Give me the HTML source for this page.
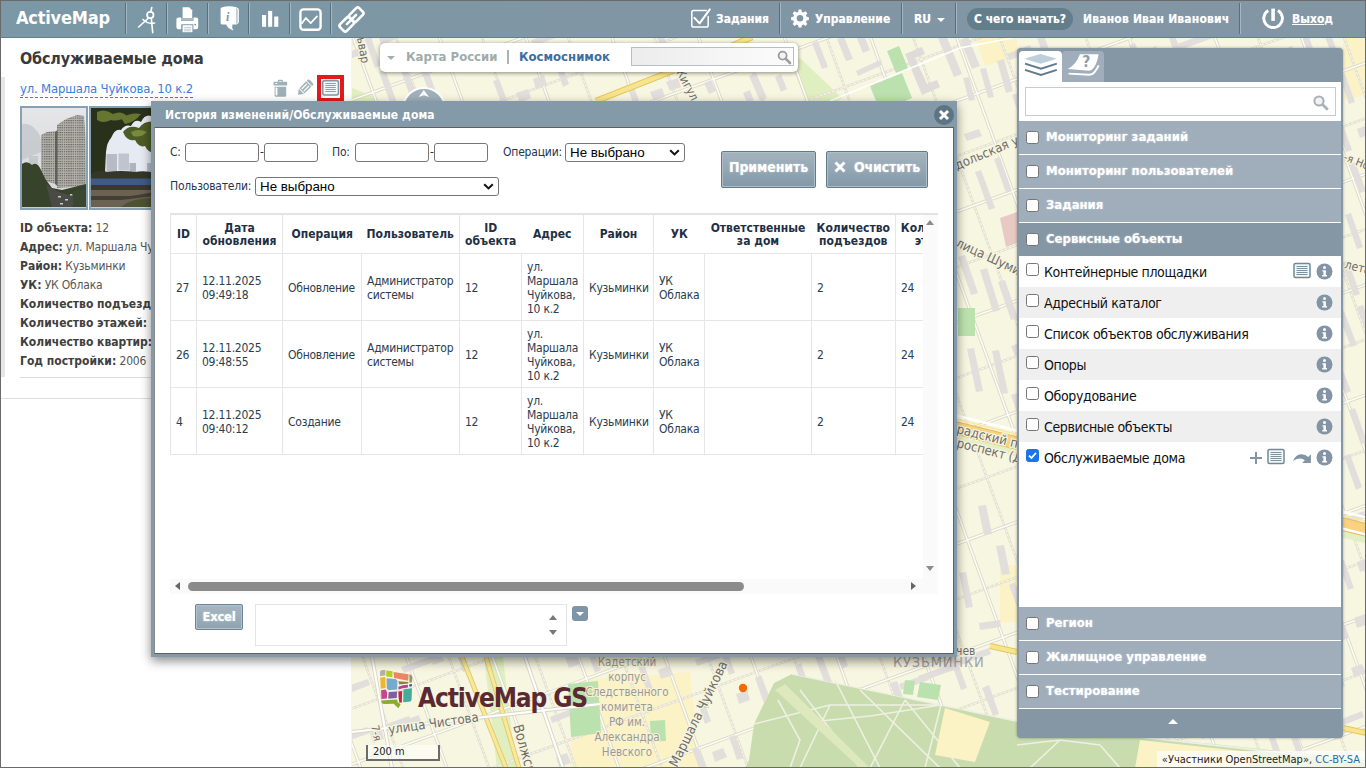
<!DOCTYPE html>
<html lang="ru">
<head>
<meta charset="utf-8">
<title>ActiveMap</title>
<style>
*{box-sizing:border-box;margin:0;padding:0}
html,body{width:1366px;height:768px;overflow:hidden;background:#fff}
body{font-family:"DejaVu Sans Condensed","Liberation Sans",sans-serif;font-size:12px;color:#2b3d4f;position:relative}
#frame{position:absolute;left:0;top:0;width:1366px;height:768px;border:1px solid #6a6a6a;z-index:100;pointer-events:none}
#app{position:absolute;left:1px;top:1px;width:1364px;height:766px;overflow:hidden;background:#fff}
/* ---------- top bar ---------- */
#top{position:absolute;left:0;top:0;width:1364px;height:37px;border-bottom:1px solid #64808f;z-index:5;background:linear-gradient(90deg,#7a98a6 0,#7c97a5 22%,#8196a4 45%,#8296a4 100%);color:#fff}
#top .logo{position:absolute;left:15px;top:5px;font-size:18px;font-weight:bold;line-height:24px;letter-spacing:-0.2px}
#top .sep{position:absolute;top:2px;width:2px;height:31px;border-left:1px solid #56707e;border-right:1px solid #a3b8c3}
#top .ti{position:absolute;top:0}
#top .txt{position:absolute;top:10px;font-size:12px;font-weight:bold;line-height:16px;white-space:nowrap;text-shadow:0 0 1px rgba(255,255,255,.4)}
#top .pill{position:absolute;left:966px;top:7px;width:106px;height:22px;border-radius:11px;background:#647d8b}
/* ---------- left panel ---------- */
#left{position:absolute;left:0;top:36px;width:350px;height:730px;background:#fff}

#left .ttl{position:absolute;left:19px;top:11px;font-size:16px;font-weight:bold;color:#3a3a3a;line-height:22px;letter-spacing:-0.15px;white-space:nowrap}
#left .stripe{position:absolute;left:0;top:40px;width:4px;height:300px;background:#e6e6e6}
#left .addr{position:absolute;left:19px;top:44px;font-size:13px;line-height:16px;color:#3b7ddd;border-bottom:1px dashed #3b7ddd;letter-spacing:-0.18px;white-space:nowrap;height:17px}
#left .ph{position:absolute;top:69px;height:104px;border:2px solid #86a1b3;background:#ccc;overflow:hidden}
#left .rows{position:absolute;left:19px;top:182px;width:320px;font-size:12px;line-height:19px;color:#555;white-space:nowrap;letter-spacing:-0.200px}
#left .rows b{color:#404040;letter-spacing:0}
#left .hr1{position:absolute;left:19px;top:340px;width:331px;height:1px;background:#dcdcdc}
#left .hr2{position:absolute;left:0;top:361px;width:350px;height:1px;background:#dedede}
#left .hi{position:absolute;left:316px;top:38px;width:27px;height:27px;border:4px solid #e3191c;background:#fff}
/* ---------- map ---------- */
#map{position:absolute;left:350px;top:36px;width:1014px;height:730px;background:#f6f3db;overflow:hidden}

#sw{position:absolute;left:29px;top:6px;width:418px;height:29px;background:#fff;border-radius:5px;box-shadow:0 1px 4px rgba(0,0,0,.45);font-size:13px;font-weight:bold;line-height:16px;white-space:nowrap}
#sw span{position:absolute;top:6px}
#sw .q{position:absolute;left:251px;top:4px;width:163px;height:19px;border:1px solid #b4c0c4;background:linear-gradient(90deg,#ececec,#f6f6f6 60%,#fcfcfc)}
#circ{position:absolute;left:51.400px;top:50px;width:44px;height:44px;border-radius:50%;background:#9fb0bb;border:2px solid #fff}
#lg{position:absolute;left:67px;top:645px;font-family:"DejaVu Sans Condensed","Liberation Sans",sans-serif;font-weight:bold;font-size:26px;line-height:32px;color:#5a2932;letter-spacing:-1.100px;white-space:nowrap}
#sc{position:absolute;left:15px;top:708px;width:74px;height:16px;border:2px solid #6b6b6b;border-top:0;background:rgba(255,255,255,.5);font-size:11px;line-height:13px;color:#222;padding-left:5px;font-family:"DejaVu Sans Condensed","Liberation Sans",sans-serif}
#att{position:absolute;right:0;bottom:0;height:16px;padding:0 5px 0 5px;background:rgba(255,255,255,.7);font-size:11px;line-height:17px;color:#222;white-space:nowrap;letter-spacing:0}
#att b{font-weight:normal;color:#1e6fa8}
/* ---------- dialog ---------- */
#dlg{position:absolute;left:150px;top:100px;width:806px;height:556px;background:#849aa8;box-shadow:0 4px 10px rgba(0,0,0,.46)}
#dlg .body{position:absolute;left:3px;top:26px;width:800px;height:527px;background:#fff;border:1px solid #5f5f5f;border-left-color:#8a8a8a}

#dlg .tt{position:absolute;left:14px;top:6px;font-size:12px;font-weight:bold;color:#fff;line-height:16px;white-space:nowrap;letter-spacing:.1px}
#dlg .cls{position:absolute;left:783px;top:4px;width:20px;height:20px;border-radius:10px;background:#5d7483}
#dlg .lbl{position:absolute;font-size:12px;line-height:16px;color:#1f3650;white-space:nowrap;letter-spacing:-0.2px}
#dlg .inp{position:absolute;height:19px;border:1px solid #767676;border-radius:3px;background:#fff}
#dlg .sel{position:absolute;height:19px;border:1px solid #767676;border-radius:3px;background:#fff;font-family:"Liberation Sans",sans-serif;font-size:13.333px;line-height:17px;color:#000;padding-left:4px;white-space:nowrap}
#dlg .sel svg{position:absolute;right:4px;top:5px}
#dlg .btn{position:absolute;top:50px;height:37px;border:1px solid #607a8a;border-radius:2px;background:linear-gradient(#a4b4bf,#8299a8);box-shadow:inset 0 0 0 1px #aebdc7;color:#fff;font-size:14px;font-weight:bold;line-height:31px;text-align:center;text-shadow:0 0 2px rgba(255,255,255,.55);white-space:nowrap;letter-spacing:-0.1px}
#grid{position:absolute;left:15px;top:85px;width:768px;height:366px;overflow:hidden}
#grid table{border-collapse:collapse;table-layout:fixed;width:809px;position:absolute;left:0;top:0;border-top:2px solid #e3e3e3}
#grid td,#grid th{border:1px solid #e6e6e6;padding:2px 5px 0;font-size:12px;line-height:14px;color:#2b3d4f;text-align:left;vertical-align:middle;letter-spacing:-0.25px;font-weight:normal}
#grid th{font-weight:bold;text-align:center;line-height:13px;color:#1f3044;letter-spacing:0;height:39px;padding:2px 3px 0}
#grid th.nb{border-left-style:hidden}
#grid tr.r td{height:67px}
#vs{position:absolute;left:768px;top:85px;width:15px;height:366px;background:#fafafa;border-top:2px solid #e3e3e3}
#hs{position:absolute;left:15px;top:451px;width:768px;height:15px;background:#fafafa}
#hs i{position:absolute;left:18px;top:3px;width:556px;height:9px;border-radius:4.500px;background:#8b8b8b}
.tri{position:absolute;width:0;height:0;border:4px solid transparent}
#xl{position:absolute;left:40px;top:476px;width:48px;height:26px;border:1px solid #6b8596;border-radius:2px;background:linear-gradient(#a7b7c2,#8da2b0);box-shadow:inset 0 0 0 1px #b3c1ca;color:#fff;font-weight:bold;font-size:13px;line-height:23px;text-align:center;text-shadow:0 0 2px rgba(255,255,255,.6);letter-spacing:-0.3px}
#ta{position:absolute;left:100px;top:476px;width:312px;height:42px;border:1px solid #e4e4e4;background:#fff}
#dd{position:absolute;left:417px;top:478px;width:16px;height:15px;border-radius:3px;background:#7d95a7}
/* ---------- right panel ---------- */
#rp{position:absolute;left:1016px;top:47px;width:326px;height:690px;background:#8597a5;border-radius:4px;box-shadow:0 0 3px rgba(0,0,0,.35)}

#rp .tab{position:absolute;top:3px;height:31px;border-radius:4px 4px 0 0}
#rp .cont{position:absolute;left:2px;top:34px;width:322px;height:627px;background:#fff}
#rp .cont>*{margin-top:-1px}
#rp .srch{position:absolute;left:6px;top:6px;width:311px;height:29px;border:1px solid #c3cdd2;background:#fff}
#rp .g{position:absolute;left:0;width:322px;height:33px;background:#a0aebb;color:#fff;font-weight:bold;font-size:13px;line-height:17px;text-shadow:0 0 2px rgba(255,255,255,.55)}
#rp .g.act{background:#8597a5}
#rp .g span{position:absolute;left:27px;top:7px;white-space:nowrap}
#rp .cb{position:absolute;left:7px;width:13px;height:13px;border:1px solid #767676;border-radius:2.500px;background:#fff}
#rp .g .cb{top:10px}
#rp .l{position:absolute;left:0;width:322px;height:31px;font-size:14px;line-height:18px;color:#111;letter-spacing:-0.35px}
#rp .l.alt{background:#efefef}
#rp .l span{position:absolute;left:25px;top:7px;white-space:nowrap}
#rp .l .cb{top:7px}
#rp .l svg{position:absolute;top:7px}
</style>
</head>
<body>
<div id="app">
  <div id="top">
    <div class="logo">ActiveMap</div>
    <div class="sep" style="left:124px"></div>
    <div class="sep" style="left:165px"></div>
    <div class="sep" style="left:206px"></div>
    <div class="sep" style="left:247px"></div>
    <div class="sep" style="left:288px"></div>
    <div class="sep" style="left:329px"></div>
    <svg class="ti" style="left:126px" width="240" height="36" viewBox="127 1 240 36" fill="none" stroke="#fff" stroke-linecap="round" stroke-linejoin="round">
      <!-- compass -->
      <g stroke-width="1.6">
        <path d="M151.8 7.5 L150.8 11.5"/>
        <circle cx="150.3" cy="15" r="3.2" stroke-width="1.8"/>
        <path d="M148.6 18 L138.6 27"/>
        <path d="M151.3 18.2 L152.7 32.6"/>
        <path d="M143 19.5 Q148 24.5 154.5 23"/>
      </g>
      <!-- printer -->
      <g stroke="none" fill="#fff">
        <path d="M182.6 7.3 h6.6 l3 3 v7.6 h-9.6z"/>
        <path d="M178.4 17.6 h2.6 v3.2 h12.6 v-3.2 h2.6 a2 2 0 0 1 2 2 v7.6 a2 2 0 0 1 -2 2 h-2.8 v-5 h-12.2 v5 h-2.8 a2 2 0 0 1 -2 -2 v-7.6 a2 2 0 0 1 2 -2z"/>
        <path d="M182.6 25.2 h9.8 v7 h-9.8z"/>
        <rect x="181" y="18.4" width="12.6" height="1.2" opacity=".6"/>
      </g>
      <g stroke="#7b97a5" stroke-width=".8" opacity=".6"><path d="M184.4 27.4h6.2M184.4 29.2h6.2M184.4 30.8h6.2"/></g>
      <circle cx="195.2" cy="24.6" r=".9" fill="#7b97a5" stroke="none"/>
      <!-- book -->
      <g stroke="none" fill="#fff">
        <path d="M221.6 7.4 Q229 5.2 236.4 7.2 L239 9 V22.6 L236.6 24.6 H232.4 Q231.4 28 233.6 30.6 Q228 29 226.2 24.6 H222 Q220.6 24.4 220.6 23 V8.8 Q220.6 7.6 221.6 7.4z"/>
      </g>
      <path d="M236.6 8.6 V23.4 M237.8 9.4 V22.6" stroke="#9fb4c0" stroke-width=".7"/>
      <text x="226" y="21" font-family="'Liberation Serif',serif" font-style="italic" font-weight="bold" font-size="12" fill="#7b97a5" stroke="none">i</text>
      <!-- bars -->
      <g stroke="none" fill="#fff">
        <rect x="262" y="15" width="4.1" height="11.8"/>
        <rect x="268.1" y="10.9" width="4.1" height="15.9"/>
        <rect x="274.2" y="16.5" width="4.1" height="10.3"/>
      </g>
      <!-- chart -->
      <rect x="300.4" y="9.4" width="20.2" height="20.4" rx="3" stroke-width="2.4"/>
      <path d="M302 23.2 L305.8 17.9 L310.7 23.1 L317 16.4" stroke-width="1.7"/>
      <!-- link -->
      <g transform="rotate(-45 351.5 19.5)" stroke-width="2.600">
        <rect x="338" y="14.800" width="13.500" height="9.400" rx="2.200"/>
        <rect x="351.500" y="14.800" width="13.500" height="9.400" rx="2.200"/>
        <path d="M345 19.500 H358" stroke-width="2.600"/>
      </g>
    </svg>
    <!-- right side -->
    <svg class="ti" style="left:686px" width="130" height="36" viewBox="687 1 130 36" fill="none" stroke="#fff" stroke-linecap="round" stroke-linejoin="round">
      <path d="M706.4 10.4 H693.6 Q691.8 10.4 691.8 12.2 V25.2 Q691.8 27 693.6 27 H706.4 Q708.2 27 708.2 25.2 V16.5" stroke-width="1.5"/>
      <path d="M694.4 17.9 L699.6 23.4 L709.8 9.3" stroke-width="2"/>
      <g fill="#fff" stroke="none">
        <path id="gear" d="M798.6 9.6h2.8l.5 2.4 1.5.6 2-1.4 2 2-1.4 2 .6 1.5 2.4.5v2.8l-2.4.5-.6 1.5 1.4 2-2 2-2-1.4-1.5.6-.5 2.4h-2.8l-.5-2.4-1.5-.6-2 1.4-2-2 1.4-2-.6-1.500-2.400-.500v-2.800l2.400-.500.6-1.500-1.400-2 2-2 2 1.400 1.500-.6zM800 14.900a3.300 3.300 0 1 0 0 6.600 3.300 3.300 0 0 0 0-6.600z" fill-rule="evenodd"/>
      </g>
    </svg>
    <div class="txt" style="left:715px">Задания</div>
    <div class="sep" style="left:778px"></div>
    <div class="txt" style="left:814px">Управление</div>
    <div class="sep" style="left:900px"></div>
    <div class="txt" style="left:913px">RU</div>
    <div style="position:absolute;left:936px;top:17px;width:0;height:0;border:4px solid transparent;border-top:4px solid #fff;border-bottom:0"></div>
    <div class="sep" style="left:954px"></div>
    <div class="pill"></div>
    <div class="txt" style="left:973px">С чего начать?</div>
    <div class="txt" style="left:1082px;letter-spacing:.18px">Иванов Иван Иванович</div>
    <div class="sep" style="left:1238px"></div>
    <svg class="ti" style="left:1256px" width="34" height="36" viewBox="1257 1 34 36" fill="none" stroke="#fff">
      <path d="M1268.200 10.400 A9.300 9.300 0 1 0 1278 10.400" stroke-width="3"/>
      <path d="M1273.100 8.600 V20.900" stroke-width="3.600"/>
    </svg>
    <div class="txt" style="left:1291px;text-decoration:underline">Выход</div>
  </div>
  <div id="left">
    <div class="ttl">Обслуживаемые дома</div>
    <div class="stripe"></div>
    <div class="addr">ул. Маршала Чуйкова, 10 к.2</div>
    <svg style="position:absolute;left:270px;top:41px" width="46" height="22" viewBox="0 0 46 22">
      <!-- trash -->
      <g fill="#9db0b8">
        <path d="M6.800 3.200 Q6.800 1.800 8.200 1.800 H10.600 Q12 1.800 12 3.200 V3.800 H10.600 V3.100 H8.200 V3.800 H6.800z"/>
        <path d="M3.600 3.800 H15.200 Q16.200 3.800 16.200 4.800 V7.400 H2.600 V4.800 Q2.600 3.800 3.600 3.800z"/>
        <path d="M3.600 8.800 H15.200 V17.400 Q15.200 18.800 13.800 18.800 H5 Q3.600 18.800 3.600 17.400z"/>
      </g>
      <rect x="4.600" y="9.600" width="1.800" height="7.800" rx=".6" fill="#fff"/>
      <rect x="4.200" y="4.900" width="2.200" height="1" rx=".5" fill="#fff"/>
      <!-- pencil -->
      <g transform="translate(33.600 10.200) rotate(45)" fill="#a3b3ba">
        <path d="M-3.700 -9 Q0 -10.500 3.700 -9 V-6.800 H-3.700z"/>
        <rect x="-3.700" y="-6" width="7.400" height="9.600"/>
        <path d="M-3.700 4.600 H3.700 L0 9.400z"/>
        <rect x="-2.100" y="-5" width="1.200" height="7.600" fill="#fff"/>
        <rect x=".9" y="-5" width="1.200" height="7.600" fill="#fff"/>
      </g>
    </svg>
    <div class="hi">
      <svg width="19" height="19" viewBox="0 0 19 19" style="position:absolute;left:0;top:0">
        <rect x="1.700" y="1.600" width="15.800" height="14.400" rx="2" fill="#f4f6f7" stroke="#7f97a3" stroke-width="1.600"/>
        <path d="M4.400 4.500h10.400M4.400 6.500h10.400M4.400 8.500h10.400M4.400 10.500h10.400M4.400 12.500h10.400" stroke="#8da0ac" stroke-width="1.100"/>
      </svg>
    </div>
    <div class="ph" style="left:19px;width:68px">
      <svg width="64" height="99" viewBox="0 0 64 99" preserveAspectRatio="none">
        <defs><linearGradient id="sky1" x1="0" y1="0" x2="0" y2="1"><stop offset="0" stop-color="#e6e6e8"/><stop offset="1" stop-color="#d2d5d8"/></linearGradient>
        <pattern id="win" width="2.200" height="2.400" patternUnits="userSpaceOnUse"><rect width="2.200" height="2.400" fill="#b4b2ab"/><rect width="1.500" height="1.100" fill="#6b6b66"/></pattern></defs>
        <rect width="64" height="99" fill="url(#sky1)"/>
        <path d="M0 16 Q8 14 16 24 Q20 30 19 44 L0 52z" fill="#c3c7cb" opacity=".8"/>
        <rect x="7" y="48" width="9" height="11" fill="#c6c9ca"/>
        <path d="M19 27 L25 24 L34 23 L34 76 L19 72z" fill="url(#win)"/>
        <path d="M35 17 L44 11 L55 7 L62 8 L63.500 30 L64 78 L35 80z" fill="url(#win)"/>
        <path d="M33 24 L35.500 22 L35.500 78 L33 76z" fill="#5f5f59"/>
        <path d="M0 56 Q5 52 10 57 Q15 53 19 62 L24 72 L30 80 L40 82 L64 76 V99 H0z" fill="#38432c"/>
        <path d="M24 76 Q34 84 44 86 L58 88 L50 99 L30 99z" fill="#4b4b45"/>
        <path d="M36 88 h3 v1.500 h-3z M43 91 h3 v1.500 h-3z M48 86 h3 v1.500 h-3z M38 95 h3 v1.500 h-3z" fill="#c9c9c9"/>
        <path d="M50 84 Q58 80 64 82 V99 H52z" fill="#3a4630"/>
      </svg>
    </div>
    <div class="ph" style="left:88px;width:68px">
      <svg width="64" height="99" viewBox="0 0 64 99" preserveAspectRatio="none">
        <rect width="64" height="99" fill="#e6ebf3"/>
        <path d="M0 0 H60 V8 Q54 6 50 14 Q44 10 40 18 Q34 16 30 22 Q24 20 20 30 Q16 34 15 44 L14 64 L0 72z" fill="#2a311a"/>
        <path d="M6 4 Q14 0 22 6 Q30 2 36 8 Q28 14 20 12 Q12 16 6 12z M30 10 Q40 4 50 6 Q44 14 34 16z" fill="#66752f"/>
        <path d="M32 24 Q38 16 48 20 Q54 12 64 14 V44 Q58 46 54 38 Q48 40 44 32 Q36 34 32 24z" fill="#4d5c27"/>
        <path d="M40 24 Q48 20 56 24 Q50 30 42 28z" fill="#7a8a3a"/>
        <rect x="15.500" y="46" width="10.500" height="19" fill="#b7bbc6"/>
        <rect x="27.500" y="45.500" width="10.500" height="17" fill="#c0c4ce"/>
        <rect x="38.500" y="55" width="6.500" height="9" fill="#b0b4bf"/>
        <rect x="56" y="55" width="6" height="10" fill="#b9bdc6"/>
        <path d="M0 66 Q10 60 16 64 Q30 62 44 64 Q54 62 64 65 V72 H0z" fill="#34362a"/>
        <rect x="0" y="70.500" width="64" height="6.500" fill="#3f5a84"/>
        <rect x="0" y="77" width="64" height="5" fill="#3a382f"/>
        <rect x="0" y="82" width="64" height="17" fill="#6b6254"/>
        <path d="M0 88 H40 L64 84 V88 L30 92 H0z" fill="#443f34"/>
        <path d="M30 99 Q40 90 64 90 V99z" fill="#4d5233"/>
      </svg>
    </div>
    <div class="rows">
      <div><b>ID объекта:</b> 12</div>
      <div><b>Адрес:</b> ул. Маршала Чуйкова, 10 к.2</div>
      <div><b>Район:</b> Кузьминки</div>
      <div><b>УК:</b> УК Облака</div>
      <div><b>Количество подъездов:</b> 2</div>
      <div><b>Количество этажей:</b> 24</div>
      <div><b>Количество квартир:</b> 184</div>
      <div><b>Год постройки:</b> 2006</div>
    </div>
    <div class="hr1"></div>
    <div class="hr2"></div>
  </div>
  <div id="map">
<svg width="1014" height="730" viewBox="351 37 1014 730" style="position:absolute;left:0;top:0">
<defs><clipPath id="nopark"><path d="M352 37H1366V768H352z M792 674 L941 705 L990 716 L1040 726 L1366 760 L1366 768 L745 768 L749 760 L754 724 L774 683z" clip-rule="evenodd"/></clipPath></defs>
<rect x="351" y="37" width="1015" height="731" fill="#f7f6e1"/>
<!-- light yellow institutional areas -->
<path d="M575 680 L690 672 L700 768 L570 768z M975 37 H1017 V58 L985 66z M1343 37 H1366 V95 L1343 100z M1000 565 H1017 V622 H1000z" fill="#fbf2c6"/>
<!-- light green strips -->
<path d="M790 62 L800 58 L842 98 L838 101 H806z M352 88 L372 96 L380 101 H352z M484 657 H503 L516 768 H497z" fill="#e0efc0"/>
<!-- park -->
<path d="M792 674 L941 705 L990 716 L1040 726 L1366 760 L1366 768 L745 768 L749 760 L754 724 L774 683z" fill="#c9dcae"/>
<path d="M792 674 L941 705 L1040 726 M778 700 L800 740 L790 768 M754 724 L830 705 L941 705 M800 690 L860 768 M830 705 L800 768 M835 680 L880 768 M860 690 L940 768 M905 700 L870 768 M905 700 L960 768 M941 705 L925 768 M810 722 L870 716 L941 705 M1040 726 L1366 762 M1060 740 L1030 768 M1100 745 L1120 768 M1017 745 L1060 740 L1100 745" fill="none" stroke="#eef0e2" stroke-width="1.6"/>
<path d="M775 690 L860 768 L870 768 L785 684z" fill="#dde9bd"/>
<!-- yellow block in park -->
<path d="M945 708 L990 722 L975 762 L935 755z M1140 740 L1250 752 V768 H1135z" fill="#fbf2c6"/>
<!-- streets -->
<g clip-path="url(#nopark)">
<path d="M-106 211 L1398 -336 M-70 309 L1433 -238 M-35 407 L1469 -140 M1 504 L1504 -43 M36 602 L1540 55 M72 700 L1575 153 M107 798 L1611 250 M143 895 L1647 348 M179 993 L1682 446 M214 1091 L1718 544 M250 1189 L1753 641 M285 1286 L1789 739 M321 1384 L1824 837 M356 1482 L1860 935 M392 1579 L1896 1032 M428 1677 L1931 1130 M463 1775 L1967 1228 M42 -226 L520 1090 M118 -253 L596 1062 M194 -281 L673 1035 M270 -309 L749 1007 M346 -336 L825 979 M422 -364 L901 952 M498 -392 L977 924 M574 -419 L1053 896 M650 -447 L1129 868 M727 -475 L1205 841 M803 -503 L1282 813 M879 -530 L1358 785 M955 -558 L1434 758 M1031 -586 L1510 730 M1107 -613 L1586 702 M1183 -641 L1662 675 M1259 -669 L1738 647 M1335 -696 L1814 619" fill="none" stroke="#e3e0d1" stroke-width="2.600"/>
<path d="M-106 211 L1398 -336 M-70 309 L1433 -238 M-35 407 L1469 -140 M1 504 L1504 -43 M36 602 L1540 55 M72 700 L1575 153 M107 798 L1611 250 M143 895 L1647 348 M179 993 L1682 446 M214 1091 L1718 544 M250 1189 L1753 641 M285 1286 L1789 739 M321 1384 L1824 837 M356 1482 L1860 935 M392 1579 L1896 1032 M428 1677 L1931 1130 M463 1775 L1967 1228 M42 -226 L520 1090 M118 -253 L596 1062 M194 -281 L673 1035 M270 -309 L749 1007 M346 -336 L825 979 M422 -364 L901 952 M498 -392 L977 924 M574 -419 L1053 896 M650 -447 L1129 868 M727 -475 L1205 841 M803 -503 L1282 813 M879 -530 L1358 785 M955 -558 L1434 758 M1031 -586 L1510 730 M1107 -613 L1586 702 M1183 -641 L1662 675 M1259 -669 L1738 647 M1335 -696 L1814 619" fill="none" stroke="#fbfaf0" stroke-width="1" stroke-dasharray="3 1.500"/>
<path d="M-124 162 L1380 -385 M-88 260 L1415 -287 M-53 358 L1451 -189 M-17 456 L1486 -92 M19 553 L1522 6 M54 651 L1558 104 M90 749 L1593 202 M125 847 L1629 299 M161 944 L1664 397 M196 1042 L1700 495 M232 1140 L1735 592 M268 1237 L1771 690 M303 1335 L1807 788 M339 1433 L1842 886 M374 1531 L1878 983 M410 1628 L1913 1081 M445 1726 L1949 1179 M4 -212 L483 1104 M80 -240 L559 1076 M156 -267 L635 1048 M232 -295 L711 1021 M308 -323 L787 993 M385 -350 L863 965 M461 -378 L939 938 M537 -406 L1016 910 M613 -433 L1092 882 M689 -461 L1168 854 M765 -489 L1244 827 M841 -517 L1320 799 M917 -544 L1396 771 M993 -572 L1472 744 M1070 -600 L1548 716 M1146 -627 L1625 688 M1222 -655 L1701 660 M1298 -683 L1777 633" fill="none" stroke="#dcd9c9" stroke-width="3.4"/>
<path d="M-124 162 L1380 -385 M-88 260 L1415 -287 M-53 358 L1451 -189 M-17 456 L1486 -92 M19 553 L1522 6 M54 651 L1558 104 M90 749 L1593 202 M125 847 L1629 299 M161 944 L1664 397 M196 1042 L1700 495 M232 1140 L1735 592 M268 1237 L1771 690 M303 1335 L1807 788 M339 1433 L1842 886 M374 1531 L1878 983 M410 1628 L1913 1081 M445 1726 L1949 1179 M4 -212 L483 1104 M80 -240 L559 1076 M156 -267 L635 1048 M232 -295 L711 1021 M308 -323 L787 993 M385 -350 L863 965 M461 -378 L939 938 M537 -406 L1016 910 M613 -433 L1092 882 M689 -461 L1168 854 M765 -489 L1244 827 M841 -517 L1320 799 M917 -544 L1396 771 M993 -572 L1472 744 M1070 -600 L1548 716 M1146 -627 L1625 688 M1222 -655 L1701 660 M1298 -683 L1777 633" fill="none" stroke="#fdfdf6" stroke-width="1.6"/>
<!-- buildings -->
<path d="M367 727L370 733L342 743L339 737zM368 679L370 685L347 694L345 687zM370 733L381 729L384 739L373 743zM409 716L412 722L383 732L381 726zM408 719L419 715L422 724L411 728zM435 655L437 661L404 673L401 667zM429 656L440 652L444 661L433 665zM453 644L459 642L469 670L463 672zM556 757L567 753L571 763L559 767zM584 704L586 710L552 723L550 717zM363 47L365 53L343 62L340 55zM565 658L577 654L580 664L569 668zM363 34L369 32L381 65L375 68zM379 72L385 69L397 103L391 105zM583 639L589 637L601 670L595 673zM401 30L404 36L381 45L379 38zM400 68L406 66L419 100L412 102zM417 61L424 58L436 92L430 94zM638 666L644 664L654 692L648 694zM658 670L669 666L673 675L661 679zM692 749L698 747L709 775L703 778zM697 701L703 699L711 721L705 724zM712 752L723 748L727 757L715 762zM493 81L499 79L512 113L506 115zM718 652L720 658L697 666L695 660zM729 737L735 735L744 758L737 760zM516 93L528 89L531 98L520 103zM717 641L723 639L735 673L729 675zM736 694L747 690L750 700L739 704zM533 79L544 75L547 85L536 89zM755 678L761 675L774 709L767 712zM564 28L567 34L533 46L531 40zM555 64L561 62L569 84L563 87zM795 666L801 663L809 686L803 688zM813 651L819 648L832 682L825 684zM628 89L634 87L644 115L638 117zM834 646L840 644L848 666L842 669zM650 92L662 88L665 97L654 101zM653 27L659 24L672 58L666 60zM666 82L678 78L681 87L670 91zM890 683L897 681L905 703L899 706zM927 674L929 680L901 690L899 684zM952 664L954 670L920 682L918 676zM743 93L750 90L758 113L752 115zM949 656L955 654L967 688L961 690zM989 648L991 654L958 666L955 660zM982 688L989 685L999 714L993 716zM1020 677L1027 675L1037 703L1031 705zM1009 585L1015 582L1027 616L1021 618zM1063 678L1065 685L1037 695L1034 689zM1088 669L1090 675L1056 687L1054 681zM1079 715L1090 711L1094 720L1082 725zM877 92L883 90L891 113L885 115zM1102 660L1105 666L1076 676L1074 670zM1097 712L1108 708L1112 717L1101 722zM1011 395L1017 393L1025 416L1019 418zM1104 661L1115 657L1118 667L1107 671zM1118 695L1124 692L1133 715L1127 717zM1011 346L1022 342L1026 352L1015 356zM1135 684L1141 682L1153 716L1147 718zM1157 691L1168 687L1171 696L1160 701zM1171 729L1182 725L1185 735L1174 739zM1175 672L1181 670L1190 693L1184 695zM1193 716L1199 714L1208 737L1202 739zM1194 660L1200 658L1212 692L1206 694zM1012 95L1018 93L1028 121L1022 124zM1214 649L1220 647L1233 681L1226 683zM1233 701L1239 699L1250 727L1243 729zM1030 45L1032 51L1010 60L1007 54zM1052 91L1054 97L1026 107L1024 101zM1239 662L1250 658L1254 667L1242 671zM1253 699L1264 695L1267 704L1256 708zM1268 736L1274 734L1284 762L1278 764zM1035 32L1041 30L1053 64L1047 66zM1050 82L1056 80L1066 108L1060 110zM1256 652L1267 648L1270 658L1259 662zM1289 732L1295 729L1303 752L1297 754zM1069 74L1075 72L1087 106L1081 108zM1292 680L1298 678L1307 700L1300 703zM1306 727L1318 723L1321 732L1310 736zM1090 62L1096 59L1106 88L1100 90zM1312 670L1318 667L1330 701L1324 703zM1326 717L1332 714L1341 737L1334 739zM1109 53L1115 50L1126 78L1120 81zM1329 660L1335 657L1345 686L1339 688zM1362 711L1364 717L1341 726L1339 720zM1129 45L1135 43L1148 76L1142 79zM1332 612L1338 610L1349 638L1343 640zM1351 668L1362 664L1366 673L1354 677zM1150 49L1156 46L1164 69L1158 71zM1183 88L1185 94L1163 103L1161 96zM1338 562L1344 560L1354 588L1348 590zM1354 618L1365 614L1369 624L1357 628zM1169 38L1175 36L1186 64L1179 67zM1183 76L1189 74L1199 102L1193 104zM1364 511L1366 518L1332 530L1330 524zM1357 562L1368 558L1371 568L1360 572zM1211 32L1213 38L1180 50L1177 44zM1203 70L1209 68L1220 96L1214 99zM1344 456L1350 454L1362 487L1356 490zM1223 67L1229 65L1239 93L1233 96zM1334 365L1340 363L1351 391L1345 394zM1349 410L1355 408L1367 442L1361 444zM1264 65L1266 71L1238 81L1236 75zM1338 314L1344 311L1357 345L1351 347zM1262 52L1268 49L1281 83L1275 86zM1297 95L1300 101L1277 109L1275 103zM1342 263L1348 260L1360 294L1354 296zM1357 307L1363 305L1373 333L1367 335zM1281 50L1292 46L1296 55L1284 59zM1300 94L1307 91L1315 114L1309 116zM1345 215L1351 213L1363 247L1357 249zM1302 36L1308 34L1316 57L1310 59zM1321 93L1332 89L1336 99L1324 103zM1336 124L1342 122L1352 150L1346 152zM1349 165L1355 162L1366 191L1360 193zM1320 24L1326 22L1339 56L1333 58zM1339 76L1345 74L1355 102L1349 104zM1357 129L1368 125L1372 134L1360 138zM812 43L818 41L828 67L822 69zM837 39L844 37L853 59L846 61zM856 36L863 33L870 50L863 53zM856 71L880 60L882 65L858 76zM938 38L946 35L962 74L954 77zM960 40L968 37L980 66L972 69zM963 78L969 77L975 100L969 101zM980 69L986 68L994 97L988 98zM997 61L1004 59L1013 91L1006 93zM704 83L711 80L716 91L709 94zM749 76L756 73L767 98L760 101zM775 77L781 74L787 89L781 92zM975 172L981 170L995 208L989 210zM994 159L1000 157L1012 191L1006 193zM964 134L979 129L982 136L967 141zM958 257L965 255L978 293L971 295zM980 270L987 268L1000 310L993 312zM998 282L1005 280L1018 318L1011 320zM967 349L974 348L983 391L976 392zM992 351L999 350L1008 393L1001 394zM978 506L986 505L992 534L984 535zM996 546L1004 545L1010 574L1002 575zM959 573L966 572L973 607L966 608zM979 623L1000 620L1001 627L980 630z" fill="#e2dedc"/>
</g>
<!-- green rects -->
<path d="M887 51 L899 46 L908 68 L896 73z M870 86 L902 73 L912 98 L905 101 H876z M958 308 H975 V336 H958z M568 684 L598 681 L601 733 L571 737z M650 721 L665 720 L666 741 L651 742z M905 680 L915 681 L913 695 L903 694z M920 682 L941 685 L938 700 L917 697z M699 700 L709 700 L709 708 L699 708z" fill="#bbe2ae"/>
<!-- pink building -->
<path d="M1000 218 L1017 212 V243 L1006 247z" fill="#e8c9c4"/>
<!-- C-shaped building -->
<path d="M905 54 L922 47 L925 54 L915 58 L927 84 L937 80 L940 87 L922 95z" fill="#e0dad9"/>
<!-- yellow roads -->
<path d="M596 101 L690 64 L752 37" fill="none" stroke="#e3c860" stroke-width="6.500"/>
<path d="M596 101 L690 64 L752 37" fill="none" stroke="#f8e48f" stroke-width="4.500"/>
<path d="M940 434 L1366 540" fill="none" stroke="#e4efc4" stroke-width="7"/>
<path d="M940 424 L1366 530" fill="none" stroke="#e6b960" stroke-width="13.500"/>
<path d="M940 424 L1366 530" fill="none" stroke="#f9d27f" stroke-width="11.500"/>
<path d="M940 411.500 L1366 517.500 M1300 518 L1366 534.500" fill="none" stroke="#fff" stroke-width="2.600"/>
<path d="M940 415 L1366 521" fill="none" stroke="#f8e9a0" stroke-width="1.500"/>
<path d="M990 646 L1017 652 M1343 728 L1366 733" fill="none" stroke="#e3c860" stroke-width="6"/>
<path d="M990 646 L1017 652 M1343 728 L1366 733" fill="none" stroke="#f8e48f" stroke-width="4"/>
<path d="M462 657 L506 768 M486 657 L519 768" fill="none" stroke="#e0c96c" stroke-width="5"/>
<path d="M462 657 L506 768 M486 657 L519 768" fill="none" stroke="#f9e89a" stroke-width="3.200"/>
<!-- main white roads -->
<path d="M352 732 L600 704 M525 657 L563 768 M372 657 L392 768" fill="none" stroke="#d9d6c6" stroke-width="4"/>
<path d="M352 732 L600 704 M525 657 L563 768 M372 657 L392 768" fill="none" stroke="#fff" stroke-width="2.200"/>
<path d="M830 101 L960 48 L1017 37" fill="none" stroke="#fff" stroke-width="1.500"/>
<!-- labels -->
<g font-family="'DejaVu Sans Condensed','Liberation Sans',sans-serif" font-size="12" fill="#6d6d6d" stroke="#f8f5de" stroke-width="2.500" paint-order="stroke">
<text transform="translate(357 38) rotate(80)">ьвар</text>
<text transform="translate(676 72) rotate(62)">Кигул</text>
<text transform="translate(957 170) rotate(-23)" font-size="13">дольская ул</text>
<text transform="translate(955 246) rotate(25)" font-size="13">лица Шумил</text>
<text font-size="13" transform="translate(956 433) rotate(14)">радский пр</text>
<text font-size="13" transform="translate(956 447) rotate(14)">роспект (Д</text>
<text x="956" y="655">чев</text>
<text transform="translate(389 734) rotate(-8)" font-size="13">улица Чистова</text>
<text transform="translate(513 726) rotate(74)" font-size="14">Волжск</text>
<text transform="translate(371 726) rotate(78)" font-size="11">7-я</text>
<text transform="translate(677 768) rotate(-64)" font-size="13.500">Маршала Чуйкова</text>
<text transform="translate(1344 268) rotate(14)">лета</text>
<text transform="translate(1343 160) rotate(22)" font-size="11">-я Но</text>
</g>
<g font-family="'DejaVu Sans Condensed','Liberation Sans',sans-serif" font-size="11.500" fill="#999" text-anchor="middle" stroke="#fbf3cf" stroke-width="2" paint-order="stroke">
<text x="627" y="666">Кадетский</text><text x="627" y="681">корпус</text><text x="627" y="696">Следственного</text><text x="627" y="711">комитета</text><text x="627" y="726">РФ им.</text><text x="627" y="741">Александра</text><text x="627" y="756">Невского</text>
</g>
<text x="893" y="667" font-family="'DejaVu Sans Condensed','Liberation Sans',sans-serif" font-size="14.500" fill="#a3a3a3" letter-spacing=".8">КУЗЬМИНКИ</text>
<circle cx="743" cy="688" r="4.200" fill="#f56a00"/>
</svg>
    <div id="sw">
      <div class="tri" style="left:7px;top:13px;border-top:4px solid #a5aeb0;border-bottom:0"></div>
      <span style="left:26px;color:#9eacab">Карта России</span>
      <i style="position:absolute;left:127px;top:7px;width:1.500px;height:14px;background:#aab4b4"></i>
      <span style="left:139px;color:#3b6ea3">Космоснимок</span>
      <div class="q"><svg style="position:absolute;left:145px;top:2px" width="15" height="15" viewBox="0 0 15 15"><circle cx="5.600" cy="5.600" r="4" fill="#f4f4f4" stroke="#9c9c9c" stroke-width="1.800"/><path d="M8.800 8.800 L13 13" stroke="#9c9c9c" stroke-width="2.600" stroke-linecap="round"/></svg></div>
    </div>
    <div id="circ"><svg width="40" height="40" viewBox="0 0 40 40"><path d="M19.800 1.100 L25 8 L19.800 6.300 L14.600 8z" fill="#fff"/></svg></div>
    <svg style="position:absolute;left:29px;top:633px" width="34" height="40" viewBox="0 0 34 40">
      <path d="M0 2.500 Q0 0 2.500 0 H5.300 V5.600 L0 6z" fill="#b0b0ad"/>
      <path d="M6.200 .5 L12.600 1.200 L12.400 7.200 L6.200 6.600z" fill="#b5cf2a"/>
      <path d="M13.500 2 L28.600 4.200 L28.200 10.800 L14 7.900z" fill="#ec8468"/>
      <path d="M29.400 4.200 Q32.400 5 32.300 8 L32 12 Q31.500 13 29.400 12.600z" fill="#8f9b62"/>
      <path d="M.2 7.400 L5.300 7 L5.700 18 L.8 18.800z" fill="#f0b52b"/>
      <path d="M6.500 8.200 L15.500 9 L17.400 10.600 L17.200 19.400 L8.600 20.300 L6.800 18.600z" fill="#76abcd"/>
      <path d="M18.300 11.200 L28.300 12 L28.200 13.400 L19.200 14.600z" fill="#8a8136"/>
      <path d="M18.400 16.800 Q23 15 28 14.800 L27.800 17.400 Q22 18 18.600 19.400z" fill="#b03f98"/>
      <path d="M29.200 14.600 L32 14 L31.800 16.200 L29.200 16.600z" fill="#3d4fa0"/>
      <path d="M1 20.200 L5.800 19.500 L7.100 22.400 L6.900 28.600 L1.500 29z" fill="#c9438f"/>
      <path d="M8.600 22 L17 21.400 L16.800 28 L8.300 28.800z" fill="#7d5fa8"/>
      <path d="M18.400 21.400 L22.200 21 L21.800 32.400 L19.400 32.800 Q18.200 27 18.400 21.400z" fill="#c2273f"/>
      <path d="M23.400 19.400 Q28 18.800 32 18.200 L31.600 29.400 Q31.400 31.600 29 31.800 L23.200 32.200z" fill="#45ab9c"/>
      <path d="M1.400 30.400 L17 29.400 L17.800 32.200 L20.600 34.200 L18.400 38.200 L13.600 33.800 L4 34 Q1.400 33.600 1.400 30.400z" fill="#8aab2e"/>
    </svg>
    <div id="lg">ActiveMap GS</div>
    <div id="sc">200 m</div>
    <div id="att">«Участники OpenStreetMap», <b>CC-BY-SA</b></div>
  </div>
  <div id="rp">
    <div class="tab" style="left:2px;width:43px;background:#fff">
      <svg width="43" height="31" viewBox="0 0 43 31"><path d="M21.500 2.900 L37.800 7.700 L21.500 12.800 L5.200 7.700z" fill="#bccfdb"/><path d="M6 12.600 L22 17.700 L37.800 12.600 M6 18.800 L22 23.900 L37.800 18.800" fill="none" stroke="#5f7a8c" stroke-width="1.900"/></svg>
    </div>
    <div class="tab" style="left:45.400px;width:41.600px;background:#a0aebb">
      <svg width="42" height="31" viewBox="0 0 42 31"><path d="M17.900 3.300 H36.600 Q35 13 31.500 17 Q29.500 19.800 27 19.800 L5.900 17.900 Q14 14 17.900 3.300z" fill="#fff"/><path d="M6.600 22.600 L27.500 23.700 Q31 23.600 33 20.500 Q35.500 17 36.600 14.300" fill="none" stroke="#fff" stroke-width="1.900"/><text x="20.200" y="16" font-family="'DejaVu Sans Condensed','Liberation Sans',sans-serif" font-weight="bold" font-size="15.500" fill="#8e9fae">?</text></svg>
    </div>
    <div class="cont">
      <div class="srch"><svg style="position:absolute;left:286.500px;top:6.600px" width="17" height="17" viewBox="0 0 17 17"><circle cx="6" cy="6" r="4.600" fill="#f2f2f2" stroke="#a8b1b6" stroke-width="2"/><path d="M9.800 9.800 L13.800 13.700" stroke="#a8b1b6" stroke-width="2.800" stroke-linecap="square"/></svg></div>
<div class="g" style="top:40px"><div class="cb"></div><span>Мониторинг заданий</span></div><div class="g" style="top:74px"><div class="cb"></div><span>Мониторинг пользователей</span></div><div class="g" style="top:108px"><div class="cb"></div><span>Задания</span></div><div class="g act" style="top:142px"><div class="cb"></div><span>Сервисные объекты</span></div><div class="l" style="top:175px"><div class="cb"></div><span>Контейнерные площадки</span><svg style="left:274px;top:6px" width="18" height="17" viewBox="0 0 18 17"><rect x="1" y="1.500" width="16" height="14" rx="1.500" fill="#f4f6f7" stroke="#6f8a96" stroke-width="1.500"/><path d="M3.500 4.500h11M3.500 6.500h11M3.500 8.500h11M3.500 10.500h11M3.500 12.500h11" stroke="#7d929f" stroke-width="1"/></svg><svg style="left:297px" width="17" height="17" viewBox="0 0 17 17"><circle cx="8.500" cy="8.500" r="8" fill="#8395a5"/><circle cx="8.500" cy="4.600" r="1.500" fill="#fff"/><path d="M6.400 7.200 H9.900 V12 H11 V13.400 H6.200 V12 H7.400 V8.600 H6.400z" fill="#fff"/></svg></div><div class="l alt" style="top:206px"><div class="cb"></div><span>Адресный каталог</span><svg style="left:297px" width="17" height="17" viewBox="0 0 17 17"><circle cx="8.500" cy="8.500" r="8" fill="#8395a5"/><circle cx="8.500" cy="4.600" r="1.500" fill="#fff"/><path d="M6.400 7.200 H9.900 V12 H11 V13.400 H6.200 V12 H7.400 V8.600 H6.400z" fill="#fff"/></svg></div><div class="l" style="top:237px"><div class="cb"></div><span>Список объектов обслуживания</span><svg style="left:297px" width="17" height="17" viewBox="0 0 17 17"><circle cx="8.500" cy="8.500" r="8" fill="#8395a5"/><circle cx="8.500" cy="4.600" r="1.500" fill="#fff"/><path d="M6.400 7.200 H9.900 V12 H11 V13.400 H6.200 V12 H7.400 V8.600 H6.400z" fill="#fff"/></svg></div><div class="l alt" style="top:268px"><div class="cb"></div><span>Опоры</span><svg style="left:297px" width="17" height="17" viewBox="0 0 17 17"><circle cx="8.500" cy="8.500" r="8" fill="#8395a5"/><circle cx="8.500" cy="4.600" r="1.500" fill="#fff"/><path d="M6.400 7.200 H9.900 V12 H11 V13.400 H6.200 V12 H7.400 V8.600 H6.400z" fill="#fff"/></svg></div><div class="l" style="top:299px"><div class="cb"></div><span>Оборудование</span><svg style="left:297px" width="17" height="17" viewBox="0 0 17 17"><circle cx="8.500" cy="8.500" r="8" fill="#8395a5"/><circle cx="8.500" cy="4.600" r="1.500" fill="#fff"/><path d="M6.400 7.200 H9.900 V12 H11 V13.400 H6.200 V12 H7.400 V8.600 H6.400z" fill="#fff"/></svg></div><div class="l alt" style="top:330px"><div class="cb"></div><span>Сервисные объекты</span><svg style="left:297px" width="17" height="17" viewBox="0 0 17 17"><circle cx="8.500" cy="8.500" r="8" fill="#8395a5"/><circle cx="8.500" cy="4.600" r="1.500" fill="#fff"/><path d="M6.400 7.200 H9.900 V12 H11 V13.400 H6.200 V12 H7.400 V8.600 H6.400z" fill="#fff"/></svg></div><div class="l" style="top:361px"><div class="cb" style="background:#1a73e8;border-color:#1a73e8"><svg style="left:0;top:0;position:absolute" width="11" height="11" viewBox="0 0 11 11"><path d="M2 5.600 L4.500 8 L9 2.800" fill="none" stroke="#fff" stroke-width="1.800"/></svg></div><span>Обслуживаемые дома</span><svg style="left:231px" width="13" height="17" viewBox="0 0 13 17"><path d="M6 3 V15 M0 9 H12" stroke="#8395a5" stroke-width="2" fill="none"/></svg><svg style="left:248px;top:6px" width="18" height="17" viewBox="0 0 18 17"><rect x="1" y="1.500" width="16" height="14" rx="1.500" fill="#f4f6f7" stroke="#6f8a96" stroke-width="1.500"/><path d="M3.500 4.500h11M3.500 6.500h11M3.500 8.500h11M3.500 10.500h11M3.500 12.500h11" stroke="#7d929f" stroke-width="1"/></svg><svg style="left:273px" width="20" height="17" viewBox="0 0 20 17"><path d="M1 11.900 Q4 5 9.500 5.300 Q13.500 5.500 16.300 8 L18.900 5.300 V13.900 H10.100 L12.800 11.300 Q8.500 7.500 1 11.900z" fill="#8395a5"/></svg><svg style="left:297px" width="17" height="17" viewBox="0 0 17 17"><circle cx="8.500" cy="8.500" r="8" fill="#8395a5"/><circle cx="8.500" cy="4.600" r="1.500" fill="#fff"/><path d="M6.400 7.200 H9.900 V12 H11 V13.400 H6.200 V12 H7.400 V8.600 H6.400z" fill="#fff"/></svg></div><div class="g" style="top:526px"><div class="cb"></div><span>Регион</span></div><div class="g" style="top:560px"><div class="cb"></div><span>Жилищное управление</span></div><div class="g" style="top:594px"><div class="cb"></div><span>Тестирование</span></div>
    </div>
    <div class="tri" style="left:151px;top:671px;border-bottom:5px solid #fff;border-top:0;border-left-width:5px;border-right-width:5px"></div>
  </div>
  <div id="dlg">
    <div class="tt">История изменений/Обслуживаемые дома</div>
    <div class="cls"><svg width="20" height="20" viewBox="0 0 20 20"><path d="M6 6 L14 14 M14 6 L6 14" stroke="#fff" stroke-width="3" /></svg></div>
    <div class="body">
      <div class="lbl" style="left:15px;top:16px">С:</div>
      <div class="inp" style="left:30px;top:15px;width:74px"></div>
      <div class="lbl" style="left:105px;top:16px">-</div>
      <div class="inp" style="left:109px;top:15px;width:54px"></div>
      <div class="lbl" style="left:177px;top:16px">По:</div>
      <div class="inp" style="left:200px;top:15px;width:74px"></div>
      <div class="lbl" style="left:275px;top:16px">-</div>
      <div class="inp" style="left:279px;top:15px;width:54px"></div>
      <div class="lbl" style="left:348px;top:16px">Операции:</div>
      <div class="sel" style="left:410px;top:15px;width:120px">Не выбрано<svg width="11" height="7" viewBox="0 0 11 7"><path d="M1.200 1.200 L5.500 5.400 L9.800 1.200" fill="none" stroke="#111" stroke-width="2"/></svg></div>
      <div class="lbl" style="left:15px;top:50px">Пользователи:</div>
      <div class="sel" style="left:100px;top:49px;width:244px">Не выбрано<svg width="11" height="7" viewBox="0 0 11 7"><path d="M1.200 1.200 L5.500 5.400 L9.800 1.200" fill="none" stroke="#111" stroke-width="2"/></svg></div>
      <div class="btn" style="left:566px;top:23px;width:95px">Применить</div>
      <div class="btn" style="left:671px;top:23px;width:102px"><svg width="12" height="12" viewBox="0 0 12 12" style="vertical-align:-1px;margin-right:8px"><path d="M1.500 1.500 L10.500 10.500 M10.500 1.500 L1.500 10.500" stroke="#fff" stroke-width="3"/></svg>Очистить</div>
      <div id="grid">
        <table>
          <colgroup><col style="width:26px"><col style="width:86px"><col style="width:79px"><col style="width:98px"><col style="width:62px"><col style="width:62px"><col style="width:70px"><col style="width:51px"><col style="width:107px"><col style="width:84px"><col style="width:84px"></colgroup>
          <tr><th>ID</th><th>Дата обновления</th><th>Операция</th><th class="nb">Пользователь</th><th>ID объекта</th><th class="nb">Адрес</th><th>Район</th><th>УК</th><th class="nb">Ответственные за дом</th><th class="nb">Количество подъездов</th><th>Количество этажей</th></tr>
          <tr class="r"><td>27</td><td>12.11.2025<br>09:49:18</td><td>Обновление</td><td>Администратор<br>системы</td><td>12</td><td>ул.<br>Маршала<br>Чуйкова,<br>10 к.2</td><td>Кузьминки</td><td>УК<br>Облака</td><td></td><td>2</td><td>24</td></tr>
          <tr class="r"><td>26</td><td>12.11.2025<br>09:48:55</td><td>Обновление</td><td>Администратор<br>системы</td><td>12</td><td>ул.<br>Маршала<br>Чуйкова,<br>10 к.2</td><td>Кузьминки</td><td>УК<br>Облака</td><td></td><td>2</td><td>24</td></tr>
          <tr class="r"><td>4</td><td>12.11.2025<br>09:40:12</td><td>Создание</td><td></td><td>12</td><td>ул.<br>Маршала<br>Чуйкова,<br>10 к.2</td><td>Кузьминки</td><td>УК<br>Облака</td><td></td><td>2</td><td>24</td></tr>
        </table>
      </div>
      <div id="vs"><div class="tri" style="left:3px;top:5px;border-bottom:5px solid #8b8b8b;border-top:0;border-left-width:4.500px;border-right-width:4.500px"></div><div class="tri" style="left:3px;top:351px;border-top:5px solid #8b8b8b;border-bottom:0;border-left-width:4.500px;border-right-width:4.500px"></div></div>
      <div id="hs"><div class="tri" style="left:5px;top:3px;border-right:5px solid #666;border-left:0;border-top-width:4.500px;border-bottom-width:4.500px"></div><i></i><div class="tri" style="left:741px;top:3px;border-left:5px solid #666;border-right:0;border-top-width:4.500px;border-bottom-width:4.500px"></div></div>
      <div id="xl">Excel</div>
      <div id="ta"><div class="tri" style="left:293px;top:10px;border-bottom:5px solid #777;border-top:0;border-left-width:4.500px;border-right-width:4.500px"></div><div class="tri" style="left:293px;top:25px;border-top:5px solid #777;border-bottom:0;border-left-width:4.500px;border-right-width:4.500px"></div></div>
      <div id="dd"><div class="tri" style="left:4px;top:6px;border-top:4px solid #fff;border-bottom:0"></div></div>
    </div>
  </div>
</div>
<div id="frame"></div>
</body>
</html>
